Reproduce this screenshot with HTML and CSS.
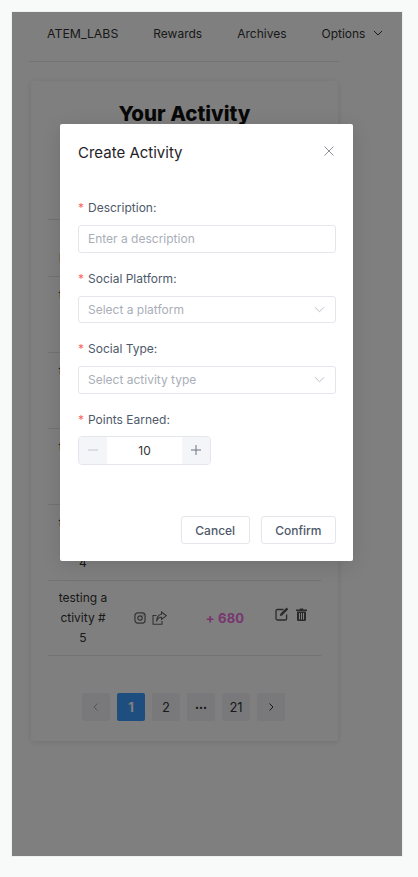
FILE: index.html
```html
<!DOCTYPE html>
<html lang="en">
<head>
  <meta charset="UTF-8">
  <meta name="viewport" content="width=device-width, initial-scale=1.0">
  <title>Your Activity</title>
  <link rel="stylesheet" href="styles.css">
</head>
<body>
  <div class="frame">
    <!-- Nav -->
    <nav class="nav">
      <span class="nav-brand">ATEM_LABS</span>
      <span>Rewards</span>
      <span>Archives</span>
      <span class="nav-options">Options
        <svg width="10" height="10" viewBox="0 0 10 10"><path d="M1 3l4 4 4-4" fill="none" stroke="currentColor" stroke-width="1"/></svg>
      </span>
    </nav>
    <div class="nav-line"></div>

    <!-- Activity card -->
    <section class="card">
      <h1>Your Activity</h1>
      <div class="table">
        <div class="row head">
          <div class="cell-name">Description</div>
          <div>Social</div>
          <div>Points</div>
          <div>Actions</div>
        </div>
        <div class="row">
          <div class="cell-name">testing a<br>ctivity #<br>1</div>
        </div>
        <div class="row">
          <div class="cell-name">testing a<br>ctivity #<br>2</div>
        </div>
        <div class="row">
          <div class="cell-name">testing a<br>ctivity #<br>3</div>
        </div>
        <div class="row">
          <div class="cell-name">testing a<br>ctivity #<br>4</div>
        </div>
        <div class="row last">
          <div class="cell-name">testing a<br>ctivity #<br>5</div>
          <div class="cell-social">
            <svg width="12" height="12" viewBox="0 0 13 13" fill="none" stroke="currentColor" stroke-width="1.3"><rect x="1" y="1" width="11" height="11" rx="3"/><circle cx="6.5" cy="6.5" r="2.4"/><circle cx="9.7" cy="3.3" r=".6" fill="currentColor" stroke="none"/></svg>
            <svg width="15" height="14" viewBox="0 0 15 14" fill="none" stroke="currentColor" stroke-width="1.1"><path d="M4.500 4.500H1v8.800h9V10"/><path d="M9.500 1l4.800 3.700-4.800 3.700V6.300C7 6.300 5.300 7.500 4.600 10.500 4.400 6.800 6.500 3.500 9.500 3.300z"/></svg>
          </div>
          <div class="cell-points">+ 680</div>
          <div class="cell-actions">
            <svg width="14" height="14" viewBox="0 0 14 14"><path d="M8.500 2.500H2.300A1.300 1.300 0 0 0 1 3.800v8A1.300 1.300 0 0 0 2.300 13h8a1.300 1.300 0 0 0 1.300-1.300V7.500" fill="none" stroke="currentColor" stroke-width="1.300"/><path d="M11.600.6l1.700 1.700-6.200 6.200-2.300.6.600-2.300z" fill="currentColor"/></svg>
            <svg width="11" height="13" viewBox="0 0 11 13"><path d="M0 1.600h3.500L4 .5h3l.5 1.100H11v1.300H0zM1 3.600h9v8A1.300 1.300 0 0 1 8.700 13H2.300A1.300 1.300 0 0 1 1 11.600zM3 5v6.500h1V5zm2 0v6.500h1V5zm2 0v6.500h1V5z" fill="currentColor" fill-rule="evenodd"/></svg>
          </div>
        </div>
      </div>

      <div class="pager">
        <span class="page muted">
          <svg width="10" height="10" viewBox="0 0 10 10"><path d="M6.500 1.500L3 5l3.500 3.500" fill="none" stroke="currentColor"/></svg>
        </span>
        <span class="page active">1</span>
        <span class="page">2</span>
        <span class="page dots">•••</span>
        <span class="page">21</span>
        <span class="page">
          <svg width="10" height="10" viewBox="0 0 10 10"><path d="M3.500 1.500L7 5 3.500 8.500" fill="none" stroke="currentColor"/></svg>
        </span>
      </div>
    </section>

    <div class="overlay"></div>

    <!-- Create modal -->
    <div class="modal">
      <div class="modal-head">
        <span class="modal-title">Create Activity</span>
        <svg class="modal-close" width="10" height="10" viewBox="0 0 10 10"><path d="M.5.500l9 9m0-9l-9 9" stroke="currentColor" fill="none"/></svg>
      </div>
      <form class="modal-form">
        <label class="field-label">Description:</label>
        <div class="input">Enter a description</div>
        <label class="field-label">Social Platform:</label>
        <div class="input select">Select a platform
          <svg width="11" height="11" viewBox="0 0 12 12"><path d="M1 3.500l5 5 5-5" fill="none" stroke="currentColor"/></svg>
        </div>
        <label class="field-label">Social Type:</label>
        <div class="input select">Select activity type
          <svg width="11" height="11" viewBox="0 0 12 12"><path d="M1 3.500l5 5 5-5" fill="none" stroke="currentColor"/></svg>
        </div>
        <label class="field-label">Points Earned:</label>
        <div class="stepper">
          <span class="step light"><svg width="12" height="12" viewBox="0 0 12 12"><path d="M1 6h10" stroke="currentColor"/></svg></span>
          <span class="step-value">10</span>
          <span class="step"><svg width="12" height="12" viewBox="0 0 12 12"><path d="M1 6h10M6 1v10" stroke="currentColor"/></svg></span>
        </div>
      </form>
      <div class="modal-foot">
        <button type="button" class="btn">Cancel</button>
        <button type="button" class="btn">Confirm</button>
      </div>
    </div>
  </div>
</body>
</html>
```

FILE: styles.css
```css
* { box-sizing: border-box; }
body { margin: 0; height: 877px; background: #f8f9f9; font-family: Inter, "Noto Sans", sans-serif; color: #1f2329; overflow: hidden; }

.frame { position: relative; width: 390px; height: 844px; margin: 12px 0 0 12px; background: #fff; overflow: hidden; outline: 1px solid #eef0f0; }

.nav { display: flex; align-items: center; height: 42px; padding: 0 0 0 35px; font-size: 12px; white-space: nowrap; color: #333; margin-bottom: 7px; }
.nav span { margin-right: 35px; }
.nav .nav-options { display: flex; align-items: center; gap: 8px; margin: 0; }
.nav .nav-brand { font-size: 12.300px; }
.nav-line { width: 310px; height: 1px; margin-left: 17px; background: #e4e6ea; }

.card { width: 307px; height: 660px; margin: 19px 0 0 19px; padding: 19px 17px 0; background: #fff; border-radius: 3px; box-shadow: 0 1px 6px rgba(0,0,0,.12); }
.card h1 { margin: 0; height: 119px; font-size: 20.500px; line-height: 28px; font-weight: 800; text-align: center; color: #111; }

.table { border-top: 1px solid #dfe2e6; }
.row { display: grid; grid-template-columns: 70px 64px 86px 52px; align-items: center; height: 76px; border-bottom: 1px solid #e4e6ea; font-size: 12px; line-height: 20px; color: #333; }
.row.head { height: 57px; padding-top: 20px; font-weight: 600; }
.row.last { height: 75px; }
.cell-name { text-align: center; }
.head .cell-name { text-align: left; padding-left: 11px; white-space: nowrap; }
.cell-social { display: flex; justify-content: center; align-items: center; gap: 6px; color: #666; margin-left: 1px; }
.cell-points { text-align: center; font-weight: 700; font-size: 13px; letter-spacing: .2px; color: #f06ce0; }
.cell-actions { display: flex; justify-content: center; align-items: center; gap: 7px; margin: -8px 0 0 -6px; color: #555; }

.pager { display: flex; justify-content: center; gap: 7px; margin-top: 37px; margin-right: 2px; }
.page { display: flex; align-items: center; justify-content: center; width: 28px; height: 28px; border-radius: 2px; background: #f2f3f7; font-size: 13px; color: #333; }
.page.muted { color: #aaa; }
.page.active { background: #3c9cff; color: #fff; font-weight: 700; }
.page.dots { font-size: 7px; letter-spacing: 0; }

.overlay { position: absolute; inset: 0; background: rgba(0,0,0,.5); }

.modal { position: absolute; left: 48px; top: 112px; width: 293px; height: 437px; padding: 0 17px 0 18px; background: #fff; border-radius: 2px; box-shadow: 0 4px 20px rgba(0,0,0,.12); }
.modal-head { display: flex; justify-content: space-between; align-items: center; height: 56px; }
.modal-title { font-size: 15px; color: #1f2329; }
.modal-close { color: #8a8f99; margin: -2px 2px 0 0; }
.modal-form { padding-top: 18px; }
.field-label { display: block; height: 20px; margin-bottom: 7px; font-size: 12px; line-height: 20px; color: #4e5969; }
.field-label::before { content: "*"; margin-right: 4px; color: #f76560; }
.input { display: flex; align-items: center; justify-content: space-between; width: 258px; height: 27.500px; margin-bottom: 16px; padding: 0 9px; border: 1px solid #e5e6eb; border-radius: 3px; font-size: 12px; color: #a9aeb8; }
.select svg { color: #b5b9c2; margin-right: 1px; }
.stepper { display: flex; width: 133px; height: 29px; margin-top: -1px; border: 1px solid #e5e6eb; border-radius: 4px; overflow: hidden; }
.step { display: flex; align-items: center; justify-content: center; width: 28px; background: #f4f5f9; color: #6b7280; }
.step.light { color: #c2c6ce; }
.step-value { flex: 1; text-align: center; font-size: 12px; line-height: 27px; color: #333; }
.modal-foot { display: flex; justify-content: flex-end; gap: 11px; margin-top: 51.500px; }
.btn { height: 28px; padding: 0 13.500px; background: #fff; border: 1px solid #e5e6eb; border-radius: 3px; font: 500 12px Inter, sans-serif; color: #4e5969; }
```
